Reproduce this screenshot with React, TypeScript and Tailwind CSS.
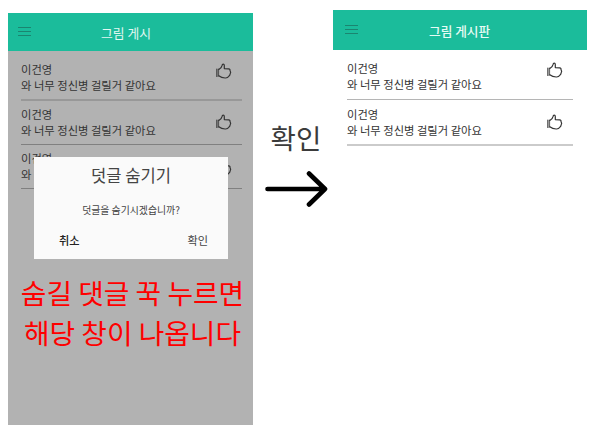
function ThumbIcon({ className = "" }: { className?: string }) {
  return (
    <svg
      viewBox="0 0 16 16"
      className={`h-4 w-4 shrink-0 ${className}`}
      fill="none"
      stroke="currentColor"
      strokeWidth="1.2"
      strokeLinejoin="round"
      strokeLinecap="round"
    >
      <path d="M.9 6V13.4" />
      <path d="M2.6 6V13.2" strokeWidth="0.8" />
      <path d="M2.8 6.4C4.6 5.4 5.8 4.3 6.1 2.4C6.2.6 8.3.6 8.3 2.4V5.6L12.6 5.8C14 6 14.2 6.8 14 7.6C14.8 8.6 14.7 10 14.2 10.8C14.1 12 13.4 12.8 12.8 13.2C12 14.5 10.8 14.9 9.6 15C7 15.1 5 14.6 2.8 12.8" />
    </svg>
  );
}

function MenuIcon() {
  return (
    <div className="mb-[2px] flex w-[13px] flex-col gap-[3px] opacity-60">
      <div className="h-px bg-[#1b6155]" />
      <div className="h-px bg-[#1b6155]" />
      <div className="h-px bg-[#1b6155]" />
    </div>
  );
}

function Comment({ className, iconClass }: { className: string; iconClass: string }) {
  return (
    <div className={`flex items-start justify-between ${className}`}>
      <div className="whitespace-nowrap">
        <p>이건영</p>
        <p>와 너무 정신병 걸릴거 같아요</p>
      </div>
      <ThumbIcon className={iconClass} />
    </div>
  );
}

function HideDialog() {
  return (
    <div className="absolute left-[26px] top-[144px] flex h-[102px] w-[194px] flex-col bg-[#fafafa] text-[#444]">
      <h2 className="pt-[6px] text-center text-[16.6px] leading-[24px]">덧글 숨기기</h2>
      <p className="pt-[15px] text-center text-[9.9px] leading-[16px]">덧글을 숨기시겠습니까?</p>
      <div className="flex justify-between pl-[25px] pr-[20px] pt-[14px] text-[11.2px] leading-[16px]">
        <button className="font-medium text-[#222]">취소</button>
        <button>확인</button>
      </div>
    </div>
  );
}

export default function App() {
  return (
    <div className="flex h-[434px] w-[597px] items-start overflow-hidden bg-white pl-2 font-['Noto_Sans_CJK_KR',sans-serif]">
      <section className="relative mt-[13px] h-[412px] w-[245px] shrink-0 bg-[#b2b2b2]">
        <header className="flex h-[38px] items-center bg-[#1bbc9b] pl-[10px]">
          <MenuIcon />
          <h1 className="pl-[70px] pt-[2px] text-[12.8px] leading-5 text-[#e2f7f2]">그림 게시</h1>
        </header>
        <div className="pl-[13px] pr-[11px] text-[11.3px] leading-[15.5px] text-[#343434]">
          <Comment className="h-[50px] border-b-2 border-[#989898] pt-[11px]" iconClass="mr-[10px] mt-[1px]" />
          <Comment className="h-[44px] border-b border-[#808080] pt-[6px]" iconClass="mr-[10px] mt-[7px]" />
          <Comment className="h-[44px] border-b border-[#808080] pt-[6px]" iconClass="mr-[10px] mt-[9px]" />
        </div>
        <HideDialog />
        <p className="pl-1 pt-[83px] text-center text-[27.8px] leading-[40px] whitespace-nowrap text-[#ff0000]">
          숨길 댓글 꾹 누르면
          <br />
          해당 창이 나옵니다
        </p>
      </section>

      <div className="mt-[117px] flex w-20 shrink-0 flex-col items-center pl-[6px]">
        <span className="text-[27.6px] leading-[40px] text-[#3b3b3b]">확인</span>
        <svg viewBox="0 0 64 38" className="mt-[13px] h-[38px] w-16" fill="none" stroke="#000" strokeWidth="4.6" strokeLinecap="round" strokeLinejoin="round">
          <path d="M3.5 19H61M45 3.5L61 19L45 34.5" />
        </svg>
      </div>

      <section className="mt-[10px] w-[254px] shrink-0 bg-white">
        <header className="flex h-[40px] items-center bg-[#1bbc9b] pl-[12px]">
          <MenuIcon />
          <h1 className="pl-[71px] pt-[2px] text-[12.7px] font-medium leading-5 text-[#e6fbf5]">그림 게시판</h1>
        </header>
        <div className="px-[14px] text-[11.3px] leading-[15.5px] text-[#343434]">
          <Comment className="h-[50px] border-b border-[#b5b5b5] pt-[11px]" iconClass="mr-[10px] mt-[1px]" />
          <Comment className="h-[46px] border-b-2 border-[#cbcbcb] pt-[7px]" iconClass="mr-[10px] mt-[7px]" />
        </div>
      </section>
    </div>
  );
}
